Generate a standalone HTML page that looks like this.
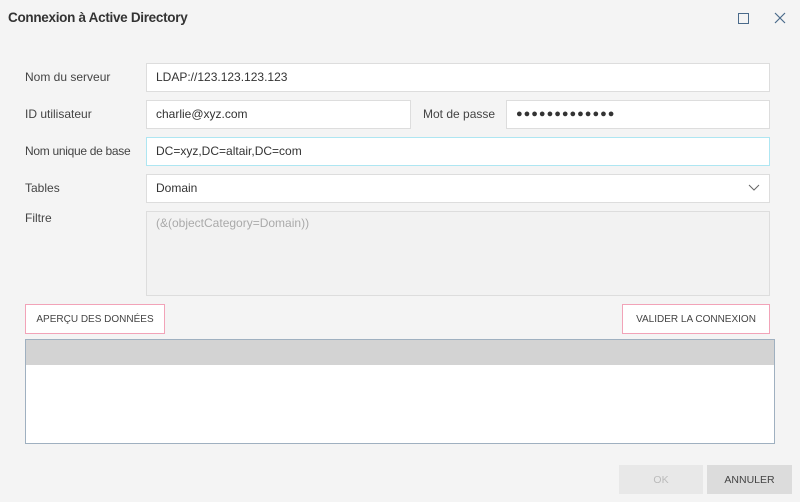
<!DOCTYPE html><html><head><style>
body{margin:0;width:800px;height:502px;background:#f4f4f4;font-family:"Liberation Sans",sans-serif;position:relative;overflow:hidden;color:#333}
.a{position:absolute;box-sizing:border-box}
.l{font-size:12px;color:#444}
.i{background:#fff;border:1px solid #ddd;font-size:12px;padding-left:9px;line-height:27px;color:#333}
.b{background:#fff;border:1.5px solid #f2a3b8;font-size:10px;color:#444;display:flex;align-items:center;justify-content:center}
</style></head><body>
<div class="a" style="left:8px;top:10px;font-size:13.5px;color:#333;font-weight:bold;letter-spacing:-0.3px">Connexion à Active Directory</div>
<div class="a" style="left:738px;top:13px;width:11px;height:11px;border:1.5px solid #4a6a8a"></div>
<svg class="a" style="left:774px;top:12px" width="12" height="12"><path d="M1 1L11 11M11 1L1 11" stroke="#4a6a8a" stroke-width="1.2"/></svg>
<div class="a l" style="left:25px;top:70px">Nom du serveur</div>
<div class="a i" style="left:146px;top:63px;width:624px;height:29px">LDAP://123.123.123.123</div>
<div class="a l" style="left:25px;top:107px">ID utilisateur</div>
<div class="a i" style="left:146px;top:100px;width:265px;height:29px">charlie@xyz.com</div>
<div class="a l" style="left:423px;top:107px">Mot de passe</div>
<div class="a i" style="left:506px;top:100px;width:264px;height:29px;font-size:11px;letter-spacing:1px">●●●●●●●●●●●●●</div>
<div class="a l" style="left:25px;top:144px;letter-spacing:-0.3px">Nom unique de base</div>
<div class="a i" style="left:146px;top:137px;width:624px;height:29px;border-color:#aee6f2">DC=xyz,DC=altair,DC=com</div>
<div class="a l" style="left:25px;top:181px">Tables</div>
<div class="a i" style="left:146px;top:174px;width:624px;height:29px">Domain</div>
<svg class="a" style="left:748px;top:184px" width="12" height="8"><path d="M1 1L6 6L11 1" stroke="#666" fill="none"/></svg>
<div class="a l" style="left:25px;top:211px">Filtre</div>
<div class="a i" style="left:146px;top:211px;width:624px;height:85px;background:#f2f2f2;color:#aaa;line-height:22px">(&amp;(objectCategory=Domain))</div>
<div class="a b" style="left:25px;top:304px;width:140px;height:30px">APERÇU DES DONNÉES</div>
<div class="a b" style="left:622px;top:304px;width:148px;height:30px">VALIDER LA CONNEXION</div>
<div class="a" style="left:25px;top:339px;width:750px;height:105px;background:#fff;border:1px solid #9fb0c0"></div>
<div class="a" style="left:26px;top:340px;width:748px;height:25px;background:#d3d3d3"></div>
<div class="a" style="left:619px;top:465px;width:84px;height:29px;background:#e8e8e8;color:#bbb;font-size:10.5px;text-align:center;line-height:30px">OK</div>
<div class="a" style="left:707px;top:465px;width:85px;height:29px;background:#dcdcdc;color:#444;font-size:10.5px;text-align:center;line-height:30px">ANNULER</div>
</body></html>
